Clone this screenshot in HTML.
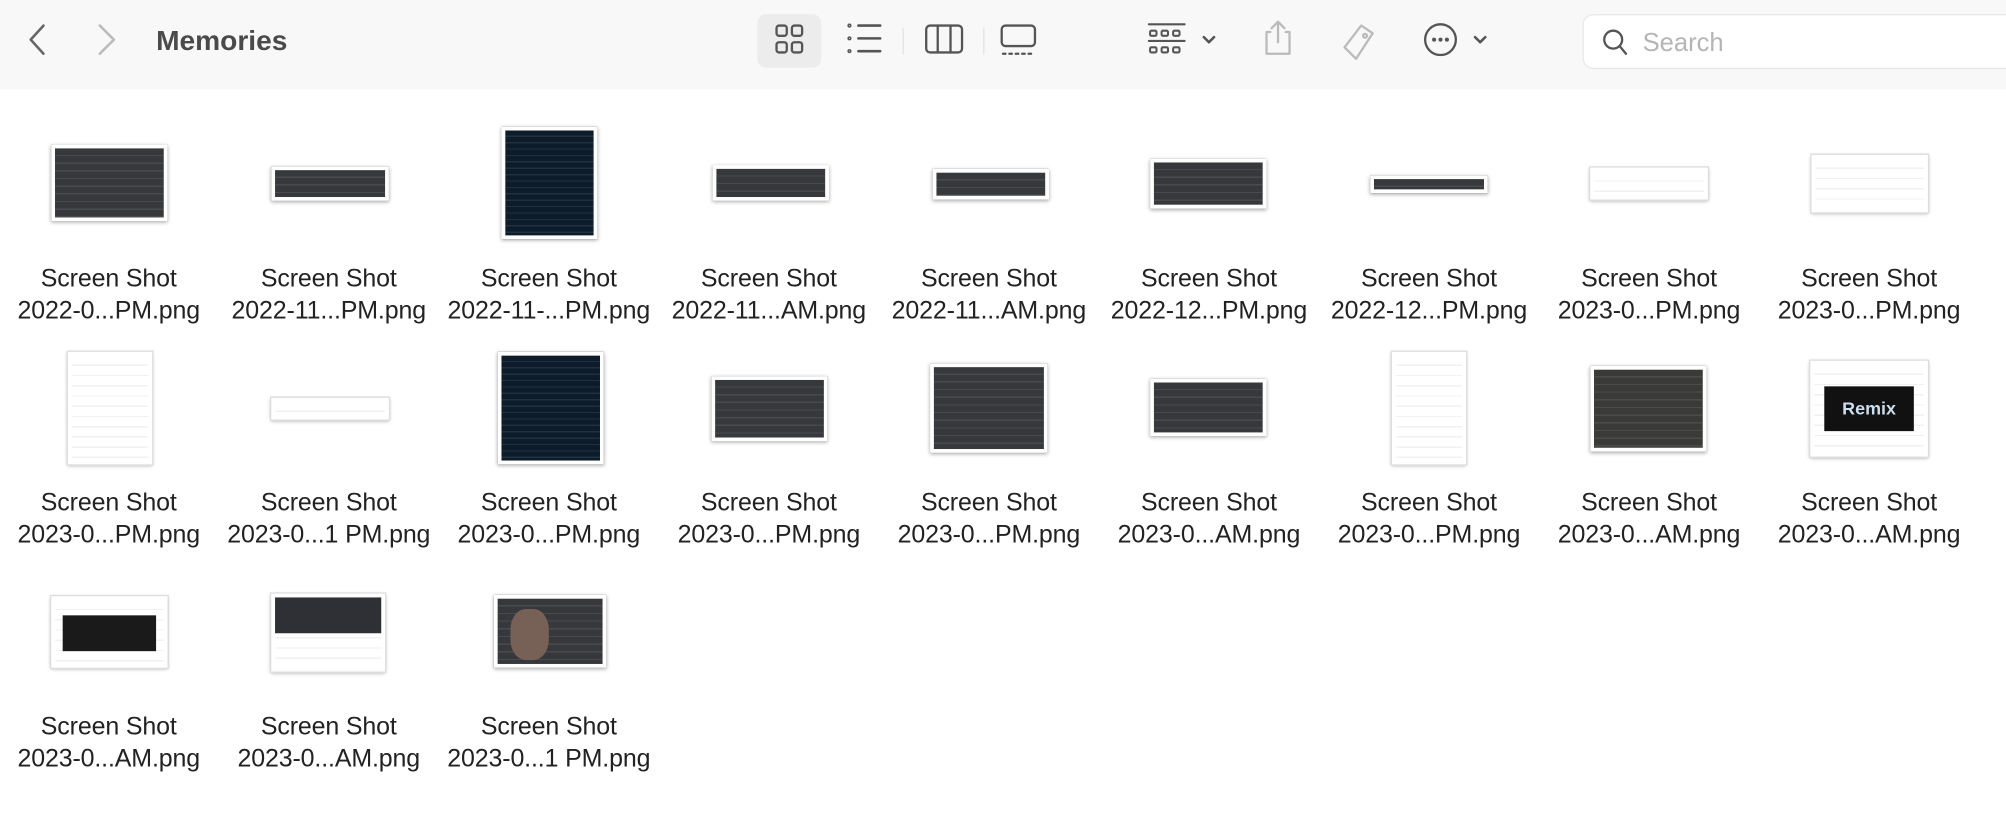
<!DOCTYPE html>
<html><head><meta charset="utf-8"><style>
html,body{margin:0;padding:0;background:#fff;overflow:hidden}
body{width:2006px;height:822px}
#s{position:absolute;left:0;top:0;width:1568px;height:643px;transform:scale(1.2793);transform-origin:0 0;font-family:"Liberation Sans",sans-serif}
#tb{position:absolute;left:0;top:0;width:1568px;height:70px;background:#f8f8f8}
.t{position:absolute;box-sizing:border-box;background:#fff;border:3px solid #fff;box-shadow:0 1px 3px rgba(0,0,0,.35)}
.d{background:#36383c;background-image:repeating-linear-gradient(180deg,transparent 0 5px,rgba(200,200,200,.12) 5px 6px)}
.k{background:#0d1c28;background-image:repeating-linear-gradient(180deg,transparent 0 4px,rgba(120,170,200,.15) 4px 5px)}
.w{background:#fff;border-color:#fff;outline:1px solid #ddd;background-image:repeating-linear-gradient(180deg,transparent 0 7px,rgba(120,120,120,.1) 7px 8px)}
.l{position:absolute;width:172px;text-align:center;font-size:19.5px;line-height:25px;color:#222;white-space:nowrap;letter-spacing:-0.1px}
</style></head><body><div id="s">
<div id="tb">
<svg width="1568" height="70" style="position:absolute;left:0;top:0">
<g fill="none" stroke-linecap="round" stroke-linejoin="round">
<path d="M34 20 L24 31 L34 42" stroke="#666" stroke-width="2"/>
<path d="M78 20 L89 31 L78 42" stroke="#bbb" stroke-width="2"/>
<rect x="592" y="11" width="50" height="42" rx="7" fill="#ececec" stroke="none"/>
<g stroke="#555" stroke-width="1.8"><rect x="607" y="20" width="8" height="8" rx="2"/><rect x="619" y="20" width="8" height="8" rx="2"/><rect x="607" y="33" width="8" height="8" rx="2"/><rect x="619" y="33" width="8" height="8" rx="2"/></g>
<g stroke="#555" stroke-width="2"><path d="M671 20h17M671 30h17M671 40h17"/><circle cx="664" cy="20" r=".6"/><circle cx="664" cy="30" r=".6"/><circle cx="664" cy="40" r=".6"/></g>
<path d="M706 22v20M769 22v20" stroke="#e2e2e2" stroke-width="1"/>
<g stroke="#555" stroke-width="1.8"><rect x="724" y="20" width="28" height="21" rx="3"/><path d="M733 20v21M743 20v21"/></g>
<g stroke="#555" stroke-width="1.8"><rect x="783" y="20" width="26" height="16" rx="3"/><path d="M784 42h2M789 42h2M794 42h2M799 42h2M804 42h2"/></g>
<g stroke="#555" stroke-width="1.6"><path d="M898 19h28M898 32h28"/><rect x="899" y="24" width="5" height="4" rx="1"/><rect x="908" y="24" width="5" height="4" rx="1"/><rect x="917" y="24" width="5" height="4" rx="1"/><rect x="899" y="37" width="5" height="4" rx="1"/><rect x="908" y="37" width="5" height="4" rx="1"/><rect x="917" y="37" width="5" height="4" rx="1"/></g>
<path d="M941 29l4 4 4-4M1153 29l4 4 4-4" stroke="#555" stroke-width="2"/>
<g stroke="#bbb" stroke-width="1.8"><path d="M993 25h-3v17h18v-17h-3M999 33V17M994 22l5-5 5 5"/></g>
<g stroke="#bbb" stroke-width="1.8"><path d="M1064 20l9 6-13 20-9-9z"/><circle cx="1067" cy="28" r="1.5"/></g>
<g stroke="#555" stroke-width="1.8"><circle cx="1126" cy="31" r="12"/></g>
<g fill="#555"><circle cx="1121" cy="31" r="1.6"/><circle cx="1126" cy="31" r="1.6"/><circle cx="1131" cy="31" r="1.6"/></g>
<rect x="1237.5" y="11.5" width="340" height="42" rx="8" fill="#fff" stroke="#e8e8e8"/>
<g stroke="#555" stroke-width="1.8"><circle cx="1261" cy="31" r="7"/><path d="M1266 36l5 6"/></g>
</g>
<text x="122" y="39" font-size="22" font-weight="bold" fill="#4a4a4a" font-family="Liberation Sans,sans-serif">Memories</text>
<text x="1284" y="40" font-size="20" fill="#b5b5b5" font-family="Liberation Sans,sans-serif">Search</text>
</svg>
</div>

<div class="t d" style="left:40px;top:113px;width:91px;height:60px"></div>
<div class="t d" style="left:212px;top:130px;width:92px;height:27px"></div>
<div class="t k" style="left:392px;top:99px;width:75px;height:88px"></div>
<div class="t d" style="left:557px;top:129px;width:91px;height:28px"></div>
<div class="t d" style="left:729px;top:132px;width:91px;height:24px"></div>
<div class="t d" style="left:899px;top:124px;width:91px;height:39px"></div>
<div class="t d" style="left:1071px;top:137px;width:92px;height:14px"></div>
<div class="t w" style="left:1243px;top:131px;width:92px;height:25px"></div>
<div class="t w" style="left:1416px;top:121px;width:91px;height:45px"></div>

<div class="t w" style="left:53px;top:275px;width:66px;height:88px"></div>
<div class="t w" style="left:212px;top:311px;width:92px;height:17px"></div>
<div class="t k" style="left:389px;top:275px;width:83px;height:88px"></div>
<div class="t d" style="left:556px;top:294px;width:91px;height:51px"></div>
<div class="t d" style="left:727px;top:284px;width:92px;height:70px"></div>
<div class="t d" style="left:899px;top:296px;width:91px;height:45px"></div>
<div class="t w" style="left:1088px;top:275px;width:58px;height:88px"></div>
<div class="t d" style="left:1243px;top:286px;width:91px;height:67px;background-color:#3a3a38"></div>
<div class="t w" style="left:1415px;top:282px;width:92px;height:75px"><div style="position:absolute;left:8px;top:17px;width:70px;height:35px;background:#111;color:#cde;font-weight:bold;font-size:14px;text-align:center;line-height:35px">Remix</div></div>

<div class="t w" style="left:40px;top:466px;width:91px;height:56px"><div style="position:absolute;left:6px;top:12px;width:73px;height:28px;background:#1a1a1a"></div></div>
<div class="t w" style="left:212px;top:464px;width:89px;height:61px"><div style="position:absolute;left:0;top:0;width:83px;height:28px;background:#2e3035"></div></div>
<div class="t d" style="left:386px;top:465px;width:88px;height:57px"><div style="position:absolute;left:10px;top:8px;width:30px;height:40px;background:#776055;border-radius:40%"></div></div>

<div class="l" style="left:-1px;top:206px">Screen Shot<br>2022-0...PM.png</div>
<div class="l" style="left:171px;top:206px">Screen Shot<br>2022-11...PM.png</div>
<div class="l" style="left:343px;top:206px">Screen Shot<br>2022-11-...PM.png</div>
<div class="l" style="left:515px;top:206px">Screen Shot<br>2022-11...AM.png</div>
<div class="l" style="left:687px;top:206px">Screen Shot<br>2022-11...AM.png</div>
<div class="l" style="left:859px;top:206px">Screen Shot<br>2022-12...PM.png</div>
<div class="l" style="left:1031px;top:206px">Screen Shot<br>2022-12...PM.png</div>
<div class="l" style="left:1203px;top:206px">Screen Shot<br>2023-0...PM.png</div>
<div class="l" style="left:1375px;top:206px">Screen Shot<br>2023-0...PM.png</div>

<div class="l" style="left:-1px;top:381px">Screen Shot<br>2023-0...PM.png</div>
<div class="l" style="left:171px;top:381px">Screen Shot<br>2023-0...1 PM.png</div>
<div class="l" style="left:343px;top:381px">Screen Shot<br>2023-0...PM.png</div>
<div class="l" style="left:515px;top:381px">Screen Shot<br>2023-0...PM.png</div>
<div class="l" style="left:687px;top:381px">Screen Shot<br>2023-0...PM.png</div>
<div class="l" style="left:859px;top:381px">Screen Shot<br>2023-0...AM.png</div>
<div class="l" style="left:1031px;top:381px">Screen Shot<br>2023-0...PM.png</div>
<div class="l" style="left:1203px;top:381px">Screen Shot<br>2023-0...AM.png</div>
<div class="l" style="left:1375px;top:381px">Screen Shot<br>2023-0...AM.png</div>

<div class="l" style="left:-1px;top:556px">Screen Shot<br>2023-0...AM.png</div>
<div class="l" style="left:171px;top:556px">Screen Shot<br>2023-0...AM.png</div>
<div class="l" style="left:343px;top:556px">Screen Shot<br>2023-0...1 PM.png</div>
</div></body></html>
